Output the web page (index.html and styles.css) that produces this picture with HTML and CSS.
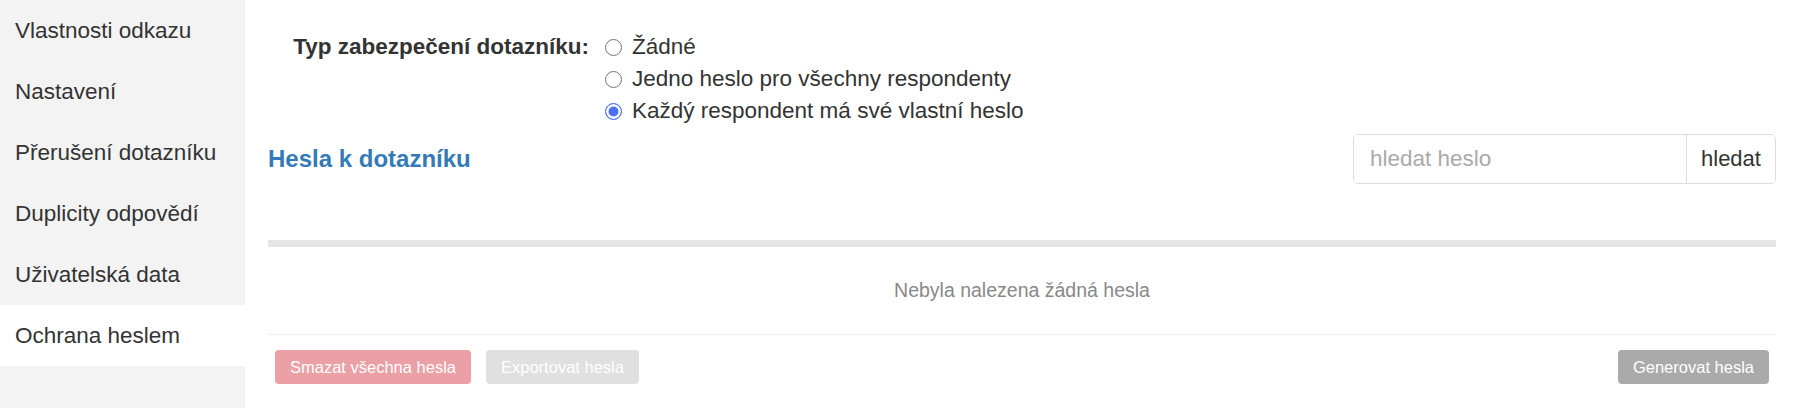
FILE: index.html
```html
<!DOCTYPE html>
<html lang="cs">
<head>
    <meta charset="UTF-8">
    <meta name="viewport" content="width=device-width, initial-scale=1.0">
    <title>Ochrana heslem</title>
    <link rel="stylesheet" href="styles.css">
</head>
<body>
    <nav class="sidebar">
        <a class="nav-item" href="#">Vlastnosti odkazu</a>
        <a class="nav-item" href="#">Nastavení</a>
        <a class="nav-item" href="#">Přerušení dotazníku</a>
        <a class="nav-item" href="#">Duplicity odpovědí</a>
        <a class="nav-item" href="#">Uživatelská data</a>
        <a class="nav-item active" href="#">Ochrana heslem</a>
    </nav>

    <main class="content">
        <div class="security-row">
            <div class="security-label">Typ zabezpečení dotazníku:</div>
            <div class="security-options">
                <label class="option"><input type="radio" name="security"> Žádné</label>
                <label class="option"><input type="radio" name="security"> Jedno heslo pro všechny respondenty</label>
                <label class="option"><input type="radio" name="security" checked> Každý respondent má své vlastní heslo</label>
            </div>
        </div>

        <div class="passwords-head">
            <h2>Hesla k dotazníku</h2>
            <div class="search-group">
                <input type="text" class="search-input" placeholder="hledat heslo">
                <button class="search-button">hledat</button>
            </div>
        </div>

        <table class="passwords-table">
            <thead><tr><th></th></tr></thead>
            <tbody>
                <tr><td class="empty">Nebyla nalezena žádná hesla</td></tr>
            </tbody>
        </table>

        <div class="actions">
            <div class="actions-left">
                <button class="btn btn-danger" disabled>Smazat všechna hesla</button>
                <button class="btn btn-light" disabled>Exportovat hesla</button>
            </div>
            <button class="btn btn-gray">Generovat hesla</button>
        </div>
    </main>
</body>
</html>
```

FILE: styles.css
```css
body {
    font-family: "Liberation Sans", Arial, sans-serif;
    display: flex;
    min-height: 100vh;
    margin: 0;
    color: #333;
    background-color: white;
}

.sidebar {
    width: 245px;
    flex-shrink: 0;
    background-color: #f3f3f3;
    display: flex;
    flex-direction: column;
}
.nav-item {
    height: 61px;
    line-height: 61px;
    padding-left: 15px;
    font-size: 22.5px;
    color: #333;
    text-decoration: none;
}
.nav-item.active {
    background-color: white;
}

.content {
    flex: 1;
    padding: 0 20px 0 23px;
}

.security-row {
    display: flex;
    margin-top: 31px;
}
.security-label {
    width: 321px;
    margin-right: 16px;
    text-align: right;
    font-size: 22.5px;
    font-weight: bold;
    line-height: 32px;
}
.security-options {
    display: flex;
    flex-direction: column;
}
.option {
    display: flex;
    align-items: center;
    height: 32px;
    font-size: 22.5px;
}
.option input {
    appearance: none;
    width: 17px;
    height: 17px;
    margin: 0 10px 0 0;
    border: 1px solid #767676;
    border-radius: 50%;
    background-color: white;
}
.option input:checked {
    border-color: #4a70f5;
    background-color: #4a70f5;
    box-shadow: inset 0 0 0 2.5px white;
}

.passwords-head {
    display: flex;
    justify-content: space-between;
    align-items: center;
    margin-top: 7px;
    height: 50px;
}
.passwords-head h2 {
    margin: 0;
    font-size: 24px;
    color: #337ab7;
}
.search-group {
    display: flex;
    width: 423px;
    height: 50px;
    box-sizing: border-box;
    border: 1px solid #dcdcdc;
    border-radius: 5px;
    overflow: hidden;
}
.search-input {
    flex: 1;
    min-width: 0;
    border: none;
    padding: 0 16px;
    font-family: inherit;
    font-size: 22.5px;
    color: #333;
    outline: none;
}
.search-input::placeholder {
    color: #aaa;
}
.search-button {
    width: 89px;
    flex-shrink: 0;
    border: none;
    border-left: 1px solid #dcdcdc;
    background-color: white;
    padding: 0;
    font-family: inherit;
    font-size: 22px;
    color: #333;
}

.passwords-table {
    width: 100%;
    margin-top: 56px;
    border-collapse: collapse;
}
.passwords-table th {
    height: 0;
    padding: 0;
    border-top: 7px solid #e5e5e5;
}
.passwords-table td.empty {
    height: 87px;
    padding: 0;
    text-align: center;
    font-size: 19.5px;
    color: #888;
    border-bottom: 1px solid #eee;
}

.actions {
    display: flex;
    justify-content: space-between;
    padding: 15px 7px 0;
}
.actions-left {
    display: flex;
    gap: 15px;
}
.btn {
    height: 34px;
    padding: 0 15px;
    border: none;
    border-radius: 4px;
    font-family: inherit;
    font-size: 16.5px;
    color: white;
}
.btn-danger {
    background-color: #eba0a6;
}
.btn-light {
    background-color: #e0e0e0;
}
.btn-gray {
    background-color: #aaa;
}
```
